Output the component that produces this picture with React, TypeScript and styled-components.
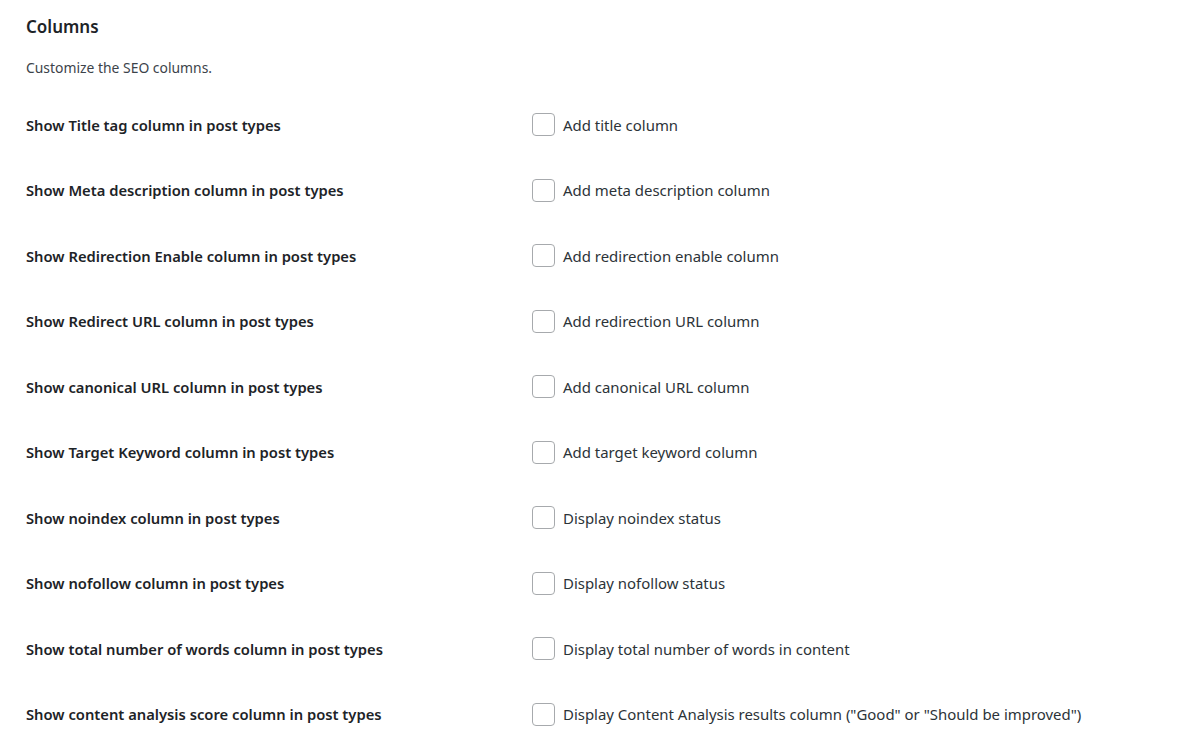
import * as React from "react";
import styled, { createGlobalStyle } from "styled-components";

const GlobalStyle = createGlobalStyle`
  html, body {
    margin: 0;
    padding: 0;
    background: #ffffff;
  }
  body {
    font-family: "Noto Sans", "Open Sans", sans-serif;
    color: #1d2327;
  }
`;

const Container = styled.div`
  width: 1204px;
  height: 743px;
  padding: 14px 26px 0;
  box-sizing: border-box;
  overflow: hidden;
`;

const Title = styled.h2`
  margin: 0;
  font-size: 17px;
  line-height: 26px;
  font-weight: 600;
  color: #1d2327;
`;

const Description = styled.p`
  margin: 18px 0 0;
  font-size: 13.9px;
  line-height: 20px;
  color: #3c434a;
`;

const Table = styled.div`
  display: grid;
  grid-template-columns: 506px 1fr;
  grid-auto-rows: 65.5px;
  margin-top: 14px;
`;

const Label = styled.div`
  display: flex;
  align-items: center;
  font-size: 14.75px;
  font-weight: 600;
  color: #1d2327;
`;

const Field = styled.label`
  display: flex;
  align-items: center;
  gap: 8px;
  font-size: 14.95px;
  color: #2c3338;
  cursor: pointer;
`;

const Checkbox = styled.input.attrs({ type: "checkbox" })`
  appearance: none;
  margin: 0;
  width: 23px;
  height: 23px;
  border: 1px solid #a7aaad;
  border-radius: 4px;
  background: #fff;
  box-sizing: border-box;
  flex-shrink: 0;
`;

type Row = {
  label: string;
  option: string;
};

const rows: Row[] = [
  { label: "Show Title tag column in post types", option: "Add title column" },
  { label: "Show Meta description column in post types", option: "Add meta description column" },
  { label: "Show Redirection Enable column in post types", option: "Add redirection enable column" },
  { label: "Show Redirect URL column in post types", option: "Add redirection URL column" },
  { label: "Show canonical URL column in post types", option: "Add canonical URL column" },
  { label: "Show Target Keyword column in post types", option: "Add target keyword column" },
  { label: "Show noindex column in post types", option: "Display noindex status" },
  { label: "Show nofollow column in post types", option: "Display nofollow status" },
  { label: "Show total number of words column in post types", option: "Display total number of words in content" },
  {
    label: "Show content analysis score column in post types",
    option: 'Display Content Analysis results column ("Good" or "Should be improved")',
  },
];

const App = () => {
  return (
    <>
      <GlobalStyle />
      <Container>
        <Title>Columns</Title>
        <Description>Customize the SEO columns.</Description>
        <Table>
          {rows.map((row) => (
            <React.Fragment key={row.label}>
              <Label>{row.label}</Label>
              <Field>
                <Checkbox />
                {row.option}
              </Field>
            </React.Fragment>
          ))}
        </Table>
      </Container>
    </>
  );
};

export default App;
